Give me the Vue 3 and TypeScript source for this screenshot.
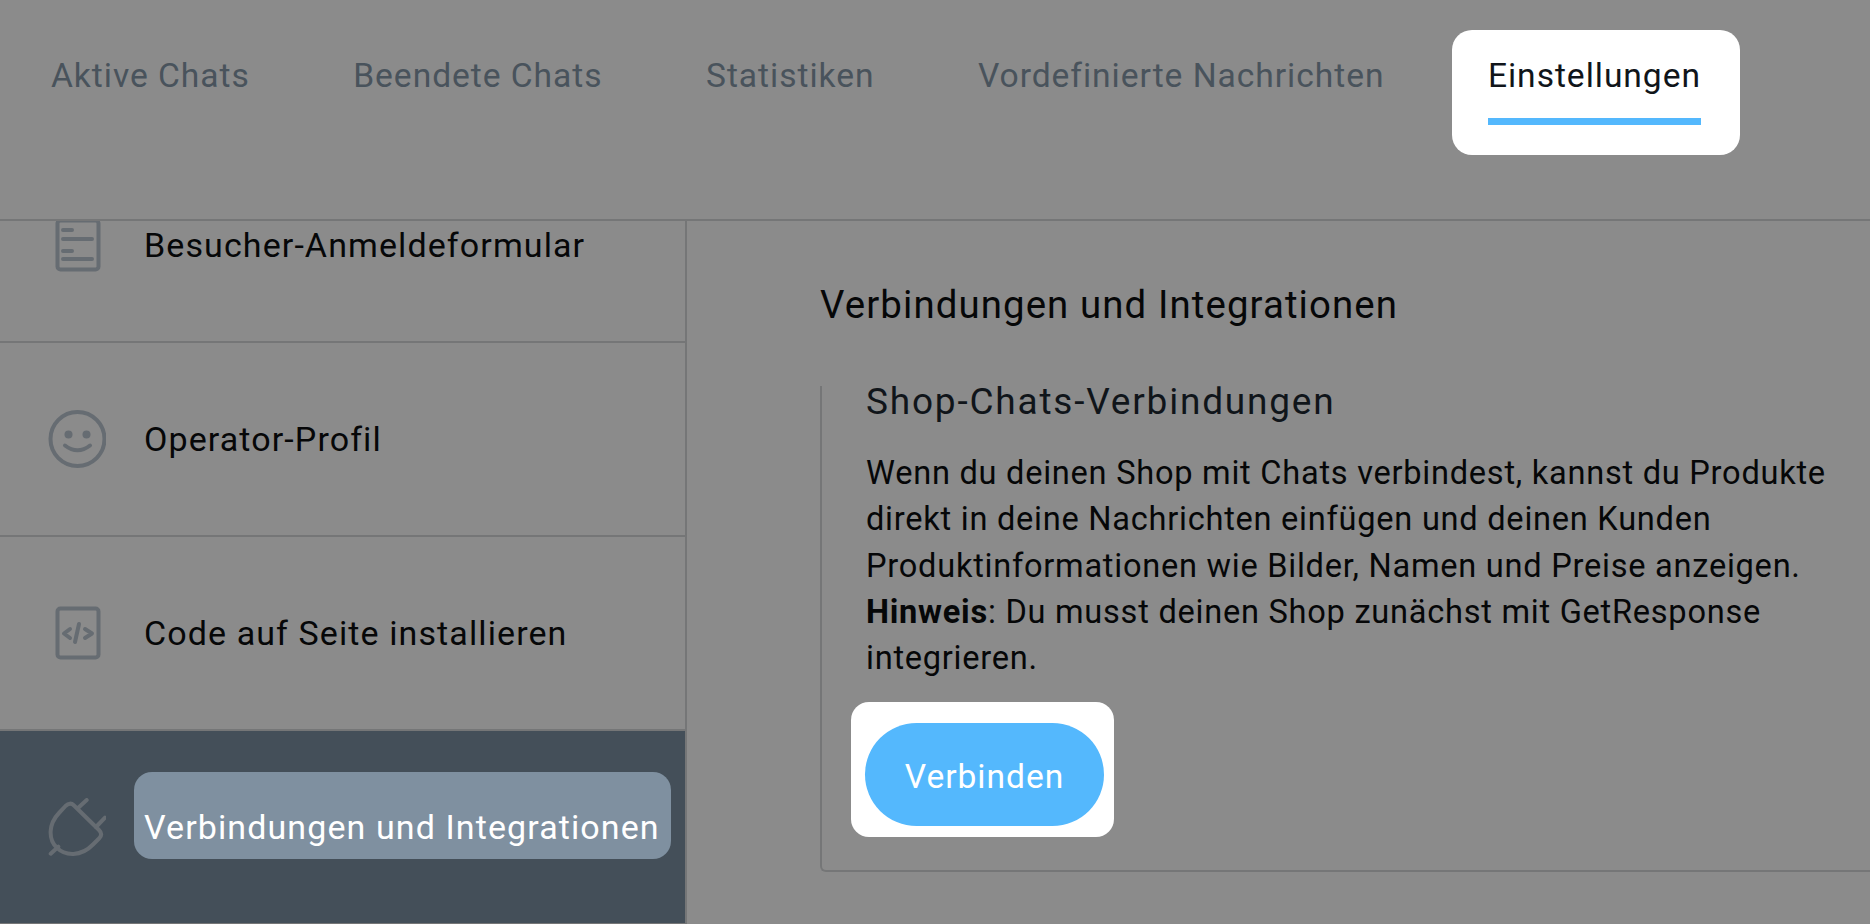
<script setup lang="ts">
const tabs = [
  { label: 'Aktive Chats', active: false },
  { label: 'Beendete Chats', active: false },
  { label: 'Statistiken', active: false },
  { label: 'Vordefinierte Nachrichten', active: false },
  { label: 'Einstellungen', active: true },
]
</script>

<template>
  <div class="page">
    <header class="top-bar">
      <nav class="tabs">
        <a v-for="tab in tabs" :key="tab.label" class="tab" :class="{ active: tab.active }">
          <span class="tab-label">{{ tab.label }}</span>
        </a>
      </nav>
    </header>

    <div class="body">
      <aside class="sidebar">
        <ul class="menu">
          <li class="menu-item">
            <svg class="menu-icon" width="58" height="58" viewBox="0 0 58 58">
              <rect x="9.5" y="4.5" width="41" height="49" rx="3" />
              <path d="M15 14h9M15 23h29M15 35h9M15 43h29" />
            </svg>
            <span class="menu-label">Besucher-Anmeldeformular</span>
          </li>
          <li class="menu-item">
            <svg class="menu-icon" width="58" height="58" viewBox="0 0 58 58">
              <circle cx="29.5" cy="29" r="27" />
              <circle class="dot" cx="20.5" cy="24.5" r="4" />
              <circle class="dot" cx="38.5" cy="24.5" r="4" />
              <path d="M17 35.5Q29.5 45 42 35.5" />
            </svg>
            <span class="menu-label">Operator-Profil</span>
          </li>
          <li class="menu-item">
            <svg class="menu-icon" width="58" height="58" viewBox="0 0 58 58">
              <rect x="9.5" y="4.5" width="41" height="49" rx="3" />
              <path d="M22 25l-6 4.5 6 4.5M37 25l7 4.5-7 4.5M31 20l-4 18" />
            </svg>
            <span class="menu-label">Code auf Seite installieren</span>
          </li>
          <li class="menu-item selected">
            <svg class="menu-icon" width="58" height="58" viewBox="0 0 58 58">
              <path d="M26 7.5L51 32Q55 36 51.5 40L45 46.5C33 59 17 58 8.7 49.7C0 41 .5 26 11 15L17.5 8Q22 3.5 26 7.5Z" />
              <path d="M38.7 2L30.3 9.7M57 19.7L48 29M2.7 55.7L10.3 48.7" />
            </svg>
            <span class="menu-label">
              <span class="spot"></span>
              <span class="spot-text">Verbindungen und Integrationen</span>
            </span>
          </li>
        </ul>
      </aside>

      <main class="content">
        <h2 class="title">Verbindungen und Integrationen</h2>
        <section class="card">
          <h3 class="card-title">Shop-Chats-Verbindungen</h3>
          <p class="card-text">
            Wenn du deinen Shop mit Chats verbindest, kannst du Produkte direkt in deine Nachrichten einfügen und deinen Kunden Produktinformationen wie Bilder, Namen und Preise anzeigen.
            <strong>Hinweis</strong>: Du musst deinen Shop zunächst mit GetResponse integrieren.
          </p>
          <div class="btn-spot">
            <button class="btn-connect">Verbinden</button>
          </div>
        </section>
      </main>
    </div>
  </div>
</template>

<style scoped>
.page {
  width: 1870px;
  height: 924px;
  overflow: hidden;
  background: #8b8b8b;
  color: #060708;
  font-family: Roboto, "Noto Sans", sans-serif;
  font-size: 33.6px;
  letter-spacing: 0.96px;
  display: flex;
  flex-direction: column;
}

.top-bar {
  height: 219px;
  flex: none;
  border-bottom: 2px solid #757677;
}

.tabs {
  display: flex;
  gap: 29.5px;
  padding: 30px 0 0 15px;
}

.tab {
  height: 125px;
  padding: 27px 38px 0 36px;
  box-sizing: border-box;
  color: #49535c;
  border-radius: 20px;
}

.tab-label {
  display: block;
  line-height: 38px;
}

.tab.active {
  padding-right: 41px;
  background: #fff;
  color: #10151a;
}

.tab.active .tab-label {
  height: 61px;
  margin-right: -2px;
  border-bottom: 7px solid #54b8fd;
}

.body {
  flex: 1;
  display: flex;
  min-height: 0;
}

.sidebar {
  width: 685px;
  flex: none;
  border-right: 2px solid #757677;
  overflow: hidden;
}

.menu {
  list-style: none;
  margin: -72px 0 0;
  padding: 0;
}

.menu-item {
  height: 194px;
  box-sizing: border-box;
  border-bottom: 2px solid #757677;
  display: flex;
  align-items: center;
  padding-left: 48px;
  gap: 38px;
  font-size: 34px;
  letter-spacing: 1.1px;
}

.menu-item.selected {
  background: #444f59;
  color: #fff;
}

.menu-icon {
  flex: none;
  fill: none;
  stroke: #666c72;
  stroke-width: 4;
  stroke-linecap: round;
  stroke-linejoin: round;
}

.menu-icon .dot {
  fill: #666c72;
  stroke: none;
}

.menu-label {
  position: relative;
  white-space: nowrap;
}

.spot {
  position: absolute;
  left: -10px;
  right: -11px;
  top: -35px;
  bottom: -12px;
  background: #7f90a0;
  border-radius: 18px;
}

.spot-text {
  position: relative;
}

.content {
  flex: 1;
  padding: 62px 0 0 133px;
  min-width: 0;
}

.title {
  margin: 0;
  font-size: 38.4px;
  font-weight: 400;
  letter-spacing: 1.1px;
  line-height: 44px;
}

.card {
  margin-top: 59px;
  padding: 0 0 33px 44px;
  border-left: 2px solid #757677;
  border-bottom: 2px solid #757677;
  border-bottom-left-radius: 6px;
}

.card-title {
  margin: 0;
  font-size: 37px;
  font-weight: 400;
  letter-spacing: 1.8px;
  line-height: 32px;
  color: #10151a;
}

.card-text {
  max-width: 1000px;
  margin: 32px 0 0;
  font-size: 32.6px;
  line-height: 46.3px;
  letter-spacing: 0.74px;
}

.card-text strong {
  font-weight: 700;
}

.btn-spot {
  display: inline-block;
  margin: 21px 0 0 -15px;
  padding: 21px 10px 11px 14px;
  background: #fff;
  border-radius: 18px;
  vertical-align: top;
}

.btn-connect {
  display: block;
  width: 239px;
  height: 103px;
  padding: 3px 0 0;
  border: none;
  border-radius: 52px;
  background: #54b8fd;
  color: #fff;
  font-family: inherit;
  font-size: 33.6px;
  letter-spacing: 0.96px;
}
</style>
